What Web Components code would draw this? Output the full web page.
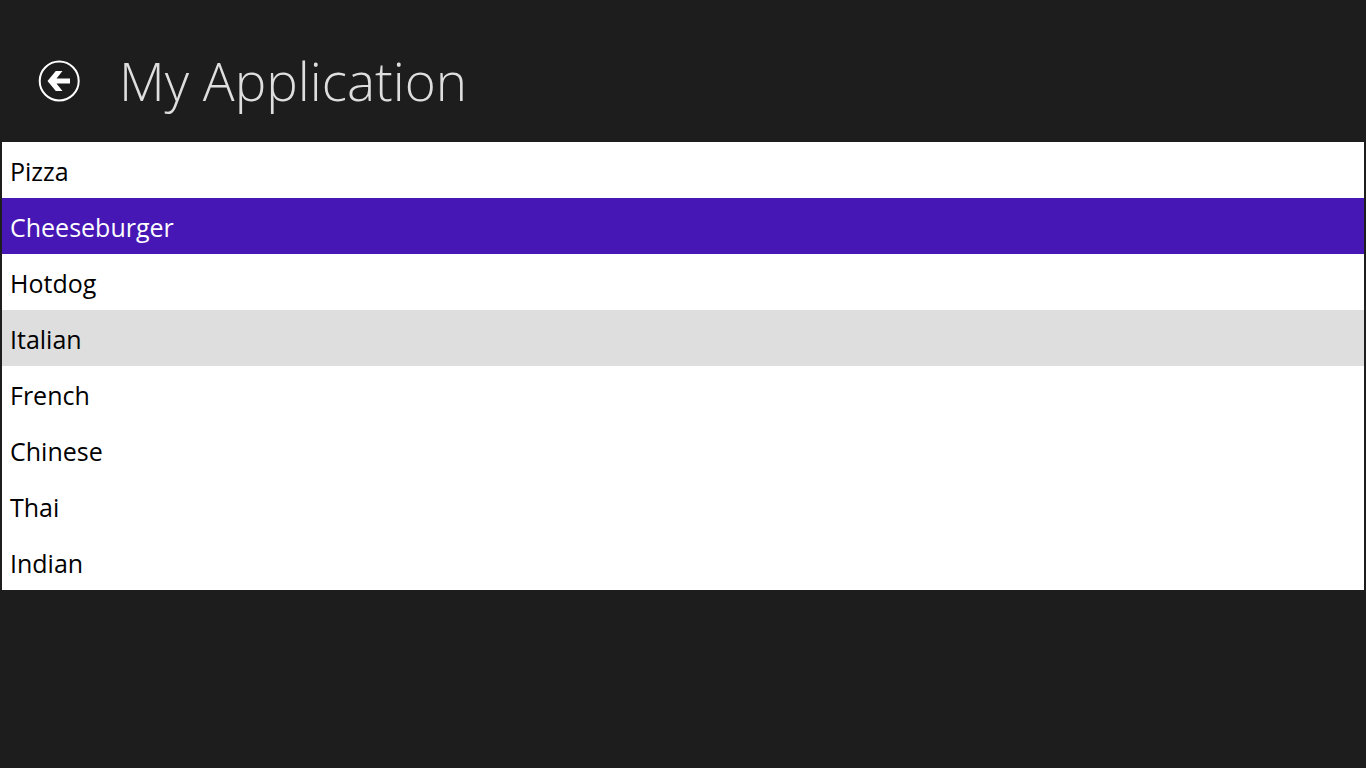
<!DOCTYPE html>
<html lang="en">
<head>
<meta charset="utf-8">
<title>My Application</title>
<style>
html,body{margin:0;min-height:100vh;background:#1d1d1d}
body{font-family:"Open Sans","Noto Sans",sans-serif}
</style>
</head>
<body>
<food-app></food-app>
<script>
class BackButton extends HTMLElement {
  constructor() {
    super();
    this.attachShadow({mode:'open'}).innerHTML = `
<style>
:host{display:block}
button{display:block;padding:0;border:0;background:none;width:44px;height:44px;color:#fff}
svg{display:block;width:44px;height:44px}
</style>
<button type="button" aria-label="Back"><svg viewBox="0 0 44 44" aria-hidden="true"><circle cx="21.200" cy="22" r="19.500" fill="none" stroke="currentColor" stroke-width="2"/><path d="M9.500 22 17.800 12H24.500L18.500 19.500H32V24.500H18.500L24.500 32H17.800Z" fill="currentColor"/></svg></button>`;
  }
}
customElements.define('back-button', BackButton);

class PageHeader extends HTMLElement {
  constructor() {
    super();
    this.attachShadow({mode:'open'}).innerHTML = `
<style>
:host{display:flex;align-items:center;gap:37px;padding:41px 38px 19px;color:#dedede}
h1{margin:0;font-size:53px;line-height:80px;font-weight:300;white-space:nowrap}
</style>
<back-button></back-button><h1><slot></slot></h1>`;
  }
}
customElements.define('page-header', PageHeader);

class ListItem extends HTMLElement {
  constructor() {
    super();
    this.attachShadow({mode:'open'}).innerHTML = `
<style>
:host{display:block;padding:11px 8px 9px;font-size:25px;line-height:36px;color:#000;background:#fff}
:host([hovered]){background:#dedede}
:host([selected]){background:#4617b4;color:#fff}
</style>
<slot></slot>`;
  }
  connectedCallback() {
    this.setAttribute('role', 'option');
    this.setAttribute('aria-selected', String(this.hasAttribute('selected')));
  }
}
customElements.define('list-item', ListItem);

class FoodApp extends HTMLElement {
  constructor() {
    super();
    this.attachShadow({mode:'open'}).innerHTML = `
<style>
:host{display:block}
.list{margin:2px}
</style>
<page-header>My Application</page-header>
<main><div class="list" role="listbox" aria-label="Food" tabindex="0">
<list-item>Pizza</list-item>
<list-item selected>Cheeseburger</list-item>
<list-item>Hotdog</list-item>
<list-item hovered>Italian</list-item>
<list-item>French</list-item>
<list-item>Chinese</list-item>
<list-item>Thai</list-item>
<list-item>Indian</list-item>
</div></main>`;
  }
}
customElements.define('food-app', FoodApp);
</script>
</body>
</html>
